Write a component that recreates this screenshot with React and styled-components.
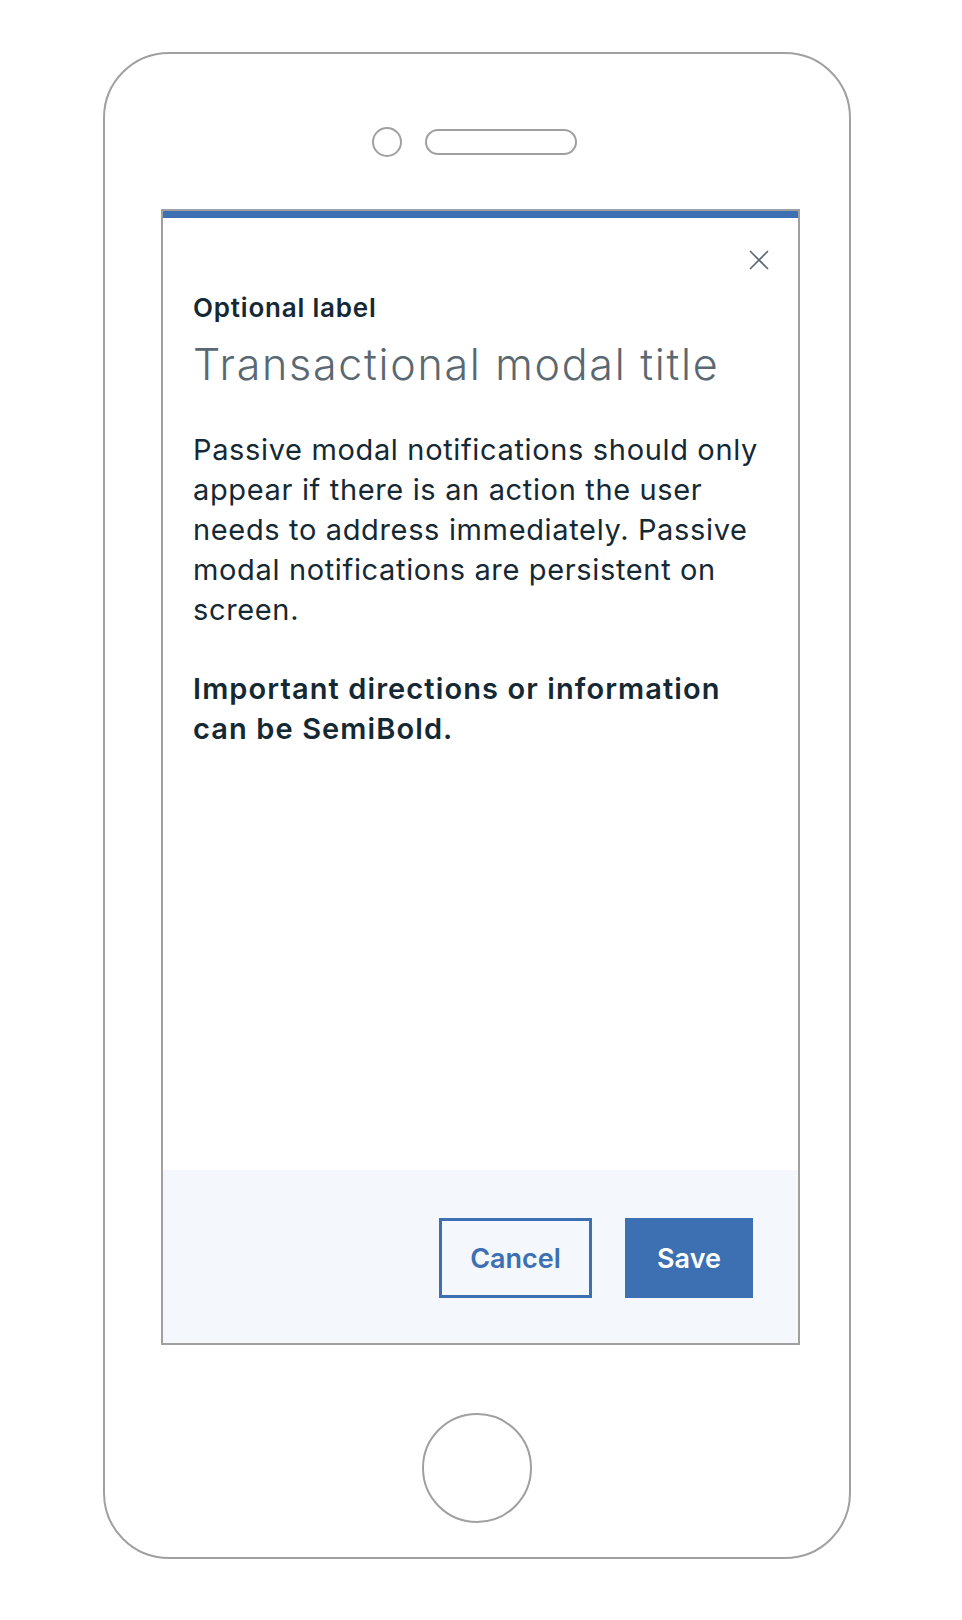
import React from "react";
import styled, { createGlobalStyle } from "styled-components";

const Global = createGlobalStyle`
  * { box-sizing: border-box; }
  html, body { margin: 0; padding: 0; background: #ffffff; }
  body { font-family: Inter, "Noto Sans", sans-serif; color: #152935; }
`;

const Page = styled.div`
  width: 962px;
  min-height: 1620px;
  padding: 52px 0 0 103px;
`;

const Phone = styled.div`
  width: 748px;
  height: 1507px;
  border: 2px solid #a0a0a0;
  border-radius: 66px;
  display: flex;
  flex-direction: column;
  padding-top: 73px;
`;

const TopRow = styled.div`
  display: flex;
  justify-content: center;
  align-items: center;
  gap: 23px;
  padding-right: 5px;
  height: 30px;
`;

const Camera = styled.div`
  width: 30px;
  height: 30px;
  border-radius: 50%;
  border: 2px solid #a0a0a0;
`;

const Speaker = styled.div`
  width: 152px;
  height: 26px;
  border-radius: 13px;
  border: 2px solid #a0a0a0;
`;

const Modal = styled.div`
  margin: 52px 0 0 56px;
  width: 639px;
  height: 1136px;
  border: 2px solid #a0a0a0;
  display: flex;
  flex-direction: column;
  background: #ffffff;
`;

const Content = styled.div`
  flex: 1;
  border-top: 7px solid #3d70b2;
  padding: 32px 29px 0 30px;
  display: flex;
  flex-direction: column;
`;

const CloseRow = styled.div`
  display: flex;
  justify-content: flex-end;
  height: 20px;
`;

const CloseButton = styled.button`
  width: 20px;
  height: 20px;
  padding: 0;
  border: none;
  background: none;
  display: block;
  svg { display: block; }
`;

const Label = styled.div`
  margin-top: 24px;
  font-size: 26px;
  line-height: 28px;
  font-weight: 600;
  letter-spacing: 0.8px;
  color: #152935;
`;

const Title = styled.h2`
  margin: 18px 0 0;
  font-size: 43px;
  line-height: 48px;
  font-weight: 300;
  color: #5a6872;
  letter-spacing: 1.7px;
`;

const Paragraph = styled.p`
  margin: ${(p) => p.$gap}px 0 0;
  font-size: 29px;
  line-height: 40px;
  font-weight: ${(p) => (p.$strong ? 600 : 400)};
  letter-spacing: ${(p) => (p.$strong ? "1.1px" : "0.65px")};
  color: #152935;
`;

const Footer = styled.div`
  height: 173px;
  background: #f4f7fb;
  display: flex;
  justify-content: flex-end;
  align-items: flex-start;
  gap: 33px;
  padding: 48px 45px 0 0;
`;

const Button = styled.button`
  height: 80px;
  width: ${(p) => p.$w}px;
  font-family: Inter, "Noto Sans", sans-serif;
  font-size: 27px;
  font-weight: 600;
  border: 3px solid #3d70b2;
  background: ${(p) => (p.$primary ? "#3d70b2" : "transparent")};
  color: ${(p) => (p.$primary ? "#ffffff" : "#3d70b2")};
  padding: 0;
  display: flex;
  align-items: center;
  justify-content: center;
`;

const HomeButton = styled.div`
  align-self: center;
  margin-top: 68px;
  width: 110px;
  height: 110px;
  border-radius: 50%;
  border: 2px solid #a0a0a0;
`;

export default function App() {
  return (
    <>
      <Global />
      <Page>
        <Phone>
          <TopRow>
            <Camera />
            <Speaker />
          </TopRow>
          <Modal>
            <Content>
              <CloseRow>
                <CloseButton aria-label="Close">
                  <svg width="20" height="20" viewBox="0 0 20 20">
                    <path d="M1 1 L19 19 M19 1 L1 19" stroke="#5a6872" strokeWidth="1.6" fill="none" />
                  </svg>
                </CloseButton>
              </CloseRow>
              <Label>Optional label</Label>
              <Title>Transactional modal title</Title>
              <Paragraph $gap={42}>
                Passive modal notifications should only appear if there is an action the user needs to address immediately. Passive modal notifications are persistent on screen.
              </Paragraph>
              <Paragraph $gap={39} $strong>
                Important directions or information can be SemiBold.
              </Paragraph>
            </Content>
            <Footer>
              <Button $w={153}>Cancel</Button>
              <Button $w={128} $primary>Save</Button>
            </Footer>
          </Modal>
          <HomeButton />
        </Phone>
      </Page>
    </>
  );
}
